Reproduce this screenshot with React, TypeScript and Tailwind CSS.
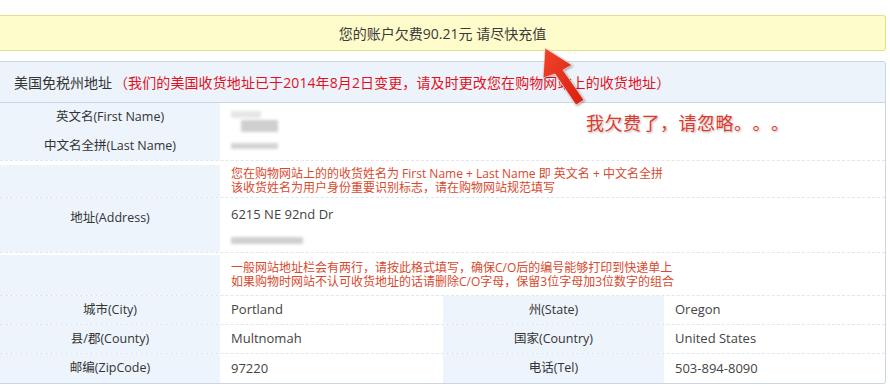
import React from 'react';

const font = {
  fontFamily: '"Open Sans", "Noto Sans CJK SC", sans-serif',
  textSpacingTrim: 'space-all',
} as React.CSSProperties;

const Blur = ({ w, h, shade = 'bg-[#c8c8c8]' }: { w: number; h: number; shade?: string }) => (
  <div className={`${shade} blur-[1.5px]`} style={{ width: w, height: h }} />
);

const Label = ({ children }: { children?: React.ReactNode }) => (
  <div className="w-[220px] shrink-0 bg-[#edf4fc] flex items-center justify-center text-[12.5px] text-[#333]">
    {children}
  </div>
);

const NoteRow = ({ lines, className }: { lines: string[]; className: string }) => (
  <div className={`flex border-b border-dashed border-[#dfe7ef] ${className}`}>
    <Label />
    <div className="flex-1 flex flex-col justify-center pl-[11px] text-[12px] leading-[14px] text-[#d64a2e]">
      {lines.map((l) => (
        <div key={l} className="h-[14px]">{l}</div>
      ))}
    </div>
  </div>
);

const QuadRow = ({ a, b, c, d, last }: { a: string; b: string; c: string; d: string; last?: boolean }) => (
  <div className={`flex h-[29px] ${last ? '' : 'border-b border-dashed border-[#dfe7ef]'}`}>
    <Label>{a}</Label>
    <div className="w-[223px] shrink-0 flex items-center pl-[11px] text-[13px] text-[#444]">{b}</div>
    <div className="w-[221px] shrink-0 bg-[#edf4fc] flex items-center justify-center text-[12.5px] text-[#333]">{c}</div>
    <div className="flex-1 flex items-center pl-[11px] text-[13px] text-[#444]">{d}</div>
  </div>
);

export default function App() {
  return (
    <div className="relative w-[890px] h-[390px] bg-white overflow-hidden" style={font}>
      <div className="w-[886px] pt-[15px]">
        <div className="h-[36px] bg-[#fdfcca] border border-l-0 border-[#e6df86] rounded-r-[3px] flex items-center justify-center text-[14px] text-[#3a3a3a]">
          您的账户欠费90.21元 请尽快充值
        </div>

        <div className="mt-[10px] border border-l-0 border-[#c9d6e4] rounded-r-[3px] overflow-hidden">
          <div className="h-[41px] bg-[#ecf3fb] border-b border-[#c9d6e4] flex items-center pl-[14px] text-[14px]">
            <span className="text-[#333]">美国免税州地址</span>
            <span className="text-[#e3101e] ml-[2px] tracking-[0.1px]">（我们的美国收货地址已于2014年8月2日变更，请及时更改您在购物网站上的收货地址）</span>
          </div>

          <div className="flex h-[29px]">
            <Label>英文名(First Name)</Label>
            <div className="flex-1 pl-[11px] pt-[8px] flex flex-col gap-[2px]">
              <Blur w={30} h={7} shade="bg-[#e6e6e6]" />
              <div className="pl-[10px]">
                <Blur w={37} h={12} shade="bg-[#cfcfcf]" />
              </div>
            </div>
          </div>
          <div className="flex h-[29px] border-b border-dashed border-[#dfe7ef]">
            <Label>中文名全拼(Last Name)</Label>
            <div className="flex-1 pl-[11px] flex items-center">
              <Blur w={47} h={6} shade="bg-[#d4d4d4]" />
            </div>
          </div>

          <NoteRow
            className="h-[37px] pt-[4px]"
            lines={[
              '您在购物网站上的的收货姓名为 First Name + Last Name 即 英文名 + 中文名全拼',
              '该收货姓名为用户身份重要识别标志，请在购物网站规范填写',
            ]}
          />

          <div className="flex h-[55px] border-b border-dashed border-[#dfe7ef]">
            <div className="w-[220px] shrink-0 bg-[#edf4fc] pt-[11px] text-center text-[12.5px] text-[#333]">地址(Address)</div>
            <div className="flex-1 pl-[11px] pt-[7px] text-[13px] text-[#444]">
              <div className="leading-[18px]">6215 NE 92nd Dr</div>
              <div className="mt-[14px]">
                <Blur w={72} h={7} shade="bg-[#d0d0d0]" />
              </div>
            </div>
          </div>

          <NoteRow
            className="h-[43px] pt-[2px]"
            lines={[
              '一般网站地址栏会有两行，请按此格式填写，确保C/O后的编号能够打印到快递单上',
              '如果购物时网站不认可收货地址的话请删除C/O字母，保留3位字母加3位数字的组合',
            ]}
          />

          <QuadRow a="城市(City)" b="Portland" c="州(State)" d="Oregon" />
          <QuadRow a="县/郡(County)" b="Multnomah" c="国家(Country)" d="United States" />
          <QuadRow a="邮编(ZipCode)" b="97220" c="电话(Tel)" d="503-894-8090" last />
        </div>
      </div>

      <svg className="absolute left-0 top-0 pointer-events-none" width="890" height="390">
        <defs>
          <linearGradient id="ag" x1="0" y1="0" x2="1" y2="1">
            <stop offset="0" stopColor="#f0442a" />
            <stop offset="1" stopColor="#d8200f" />
          </linearGradient>
        </defs>
        <polygon
          points="545,48 572,65 563,70 584,100 576,105 555,74 543,78"
          fill="url(#ag)"
          stroke="#fff"
          strokeWidth="0.6"
          style={{ filter: 'drop-shadow(1px 1px 1px rgba(0,0,0,0.35))' }}
        />
      </svg>

      <div
        className="absolute left-[586px] top-[110px] text-[18px] leading-[24px] text-[#e0382a] whitespace-nowrap tracking-[0.5px]"
        style={{ fontFamily: '"Noto Sans CJK SC", sans-serif', textShadow: '0 0 2px #fff, 1px 1px 2px rgba(0,0,0,0.35)' }}
      >
        我欠费了，请忽略。。。
      </div>
    </div>
  );
}
